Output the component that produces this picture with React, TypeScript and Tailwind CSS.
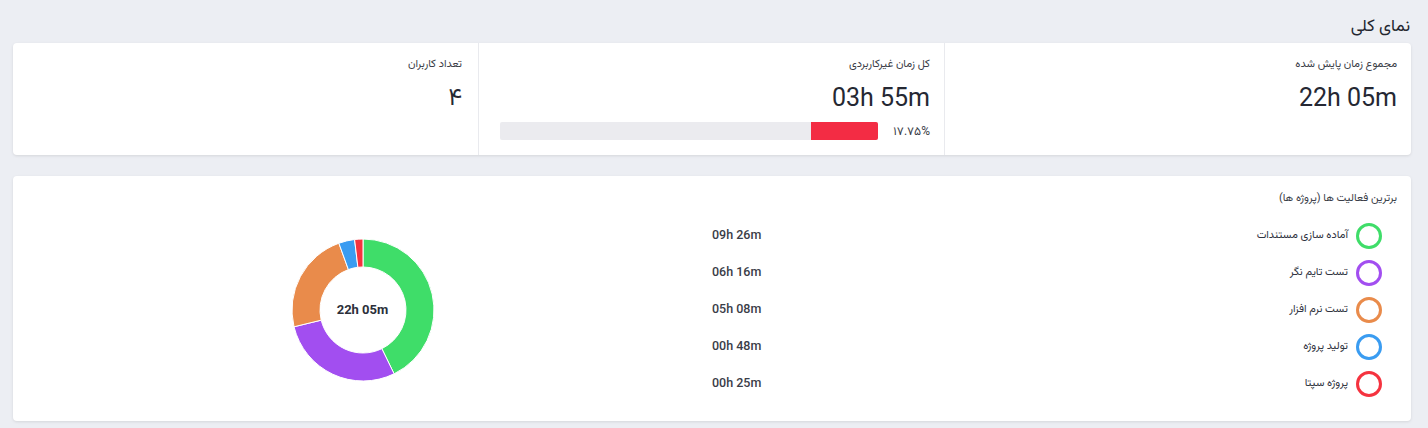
import React from "react";

const items = [
  { label: "آماده سازی مستندات", time: "09h 26m", min: 566, color: "#3fdd69" },
  { label: "تست تایم نگر", time: "06h 16m", min: 376, color: "#a24ef0" },
  { label: "تست نرم افزار", time: "05h 08m", min: 308, color: "#e98b4b" },
  { label: "تولید پروژه", time: "00h 48m", min: 48, color: "#3a9cf1" },
  { label: "پروژه سپتا", time: "00h 25m", min: 25, color: "#f5333f" },
];

function arc(cx: number, cy: number, r1: number, r2: number, a0: number, a1: number) {
  const p = (r: number, a: number) => {
    const rad = ((a - 90) * Math.PI) / 180;
    return [cx + r * Math.cos(rad), cy + r * Math.sin(rad)];
  };
  const large = a1 - a0 > 180 ? 1 : 0;
  const [x0, y0] = p(r2, a0);
  const [x1, y1] = p(r2, a1);
  const [x2, y2] = p(r1, a1);
  const [x3, y3] = p(r1, a0);
  return `M${x0} ${y0} A${r2} ${r2} 0 ${large} 1 ${x1} ${y1} L${x2} ${y2} A${r1} ${r1} 0 ${large} 0 ${x3} ${y3} Z`;
}

function Donut() {
  const total = items.reduce((s, i) => s + i.min, 0);
  let a = 0;
  return (
    <div className="relative w-[144px] h-[144px]">
      <svg width="144" height="144" viewBox="0 0 144 144">
        {items.map((it) => {
          const a0 = a;
          const a1 = a + (it.min / total) * 360;
          a = a1;
          return <path key={it.label} d={arc(72, 72, 43, 71, a0, a1)} fill={it.color} stroke="#fff" strokeWidth="1" />;
        })}
      </svg>
      <div className="absolute inset-0 flex items-center justify-center text-[13px] font-bold text-[#2b2f3a]" dir="ltr">
        22h 05m
      </div>
    </div>
  );
}

export default function App() {
  const fa = { fontFamily: '"Roboto", "Vazirmatn", "Noto Sans Arabic", "DejaVu Sans", sans-serif' };
  return (
    <div dir="rtl" style={fa} className="min-h-[428px] bg-[#eceef3] pl-[13px] pr-[17px] pt-[9px] text-[#2f3340]">
      <div className="h-[34px] flex items-center pr-[1px] text-[17px] text-[#23262f]">نمای کلی</div>
      <div className="bg-white rounded-[4px] shadow-[0_1px_3px_rgba(0,0,0,0.1)] grid grid-cols-3 h-[112px]">
        <div className="pr-[14px] pl-[20px] pt-[13px]">
          <div className="text-[11px] h-[16px] leading-[16px] text-[#3a3d47]">مجموع زمان پایش شده</div>
          <div dir="ltr" className="text-right text-[25px] leading-[30px] mt-[11px] text-[#252833]">22h 05m</div>
        </div>
        <div className="pr-[14px] pl-[21px] pt-[13px] border-r border-[#e9eaee]">
          <div className="text-[11px] h-[16px] leading-[16px] text-[#3a3d47]">کل زمان غیرکاربردی</div>
          <div dir="ltr" className="text-right text-[25px] leading-[30px] mt-[11px] text-[#252833]">03h 55m</div>
          <div className="flex items-center mt-[9px] gap-[6px]">
            <div className="text-[12px] tracking-[1px] text-[#3a3d47] w-[46px] shrink-0">۱۷.۷۵%</div>
            <div className="flex-1 h-[18px] bg-[#ebebef] rounded-[2px] overflow-hidden flex">
              <div className="h-full bg-[#f32c44]" style={{ width: "17.75%" }} />
            </div>
          </div>
        </div>
        <div className="pr-[16px] pt-[13px] border-r border-[#e9eaee]">
          <div className="text-[11px] h-[16px] leading-[16px] text-[#3a3d47]">تعداد کاربران</div>
          <div className="text-[24px] leading-[30px] mt-[10px] text-[#252833]">۴</div>
        </div>
      </div>
      <div className="mt-[21px] bg-white rounded-[4px] shadow-[0_1px_3px_rgba(0,0,0,0.1)] h-[245px] pt-[14px]">
        <div className="pr-[14px] text-[11px] h-[16px] leading-[16px] text-[#3a3d47]">برترین فعالیت ها (پروژه ها)</div>
        <div className="flex mt-[11px]">
          <div className="flex-1 pr-[29px] flex flex-col">
            {items.map((it) => (
              <div key={it.label} className="h-[37px] flex items-center gap-[8px]">
                <span className="w-[26px] h-[26px] rounded-full border-[3px] shrink-0" style={{ borderColor: it.color }} />
                <span className="text-[11px] text-[#2f3340]">{it.label}</span>
              </div>
            ))}
          </div>
          <div className="w-[64px] flex flex-col">
            {items.map((it) => (
              <div key={it.time} dir="ltr" className="h-[37px] flex items-center text-[12.5px] font-medium text-[#3a3d47]">
                {it.time}
              </div>
            ))}
          </div>
          <div className="w-[699px] flex items-center justify-center">
            <Donut />
          </div>
        </div>
      </div>
    </div>
  );
}
